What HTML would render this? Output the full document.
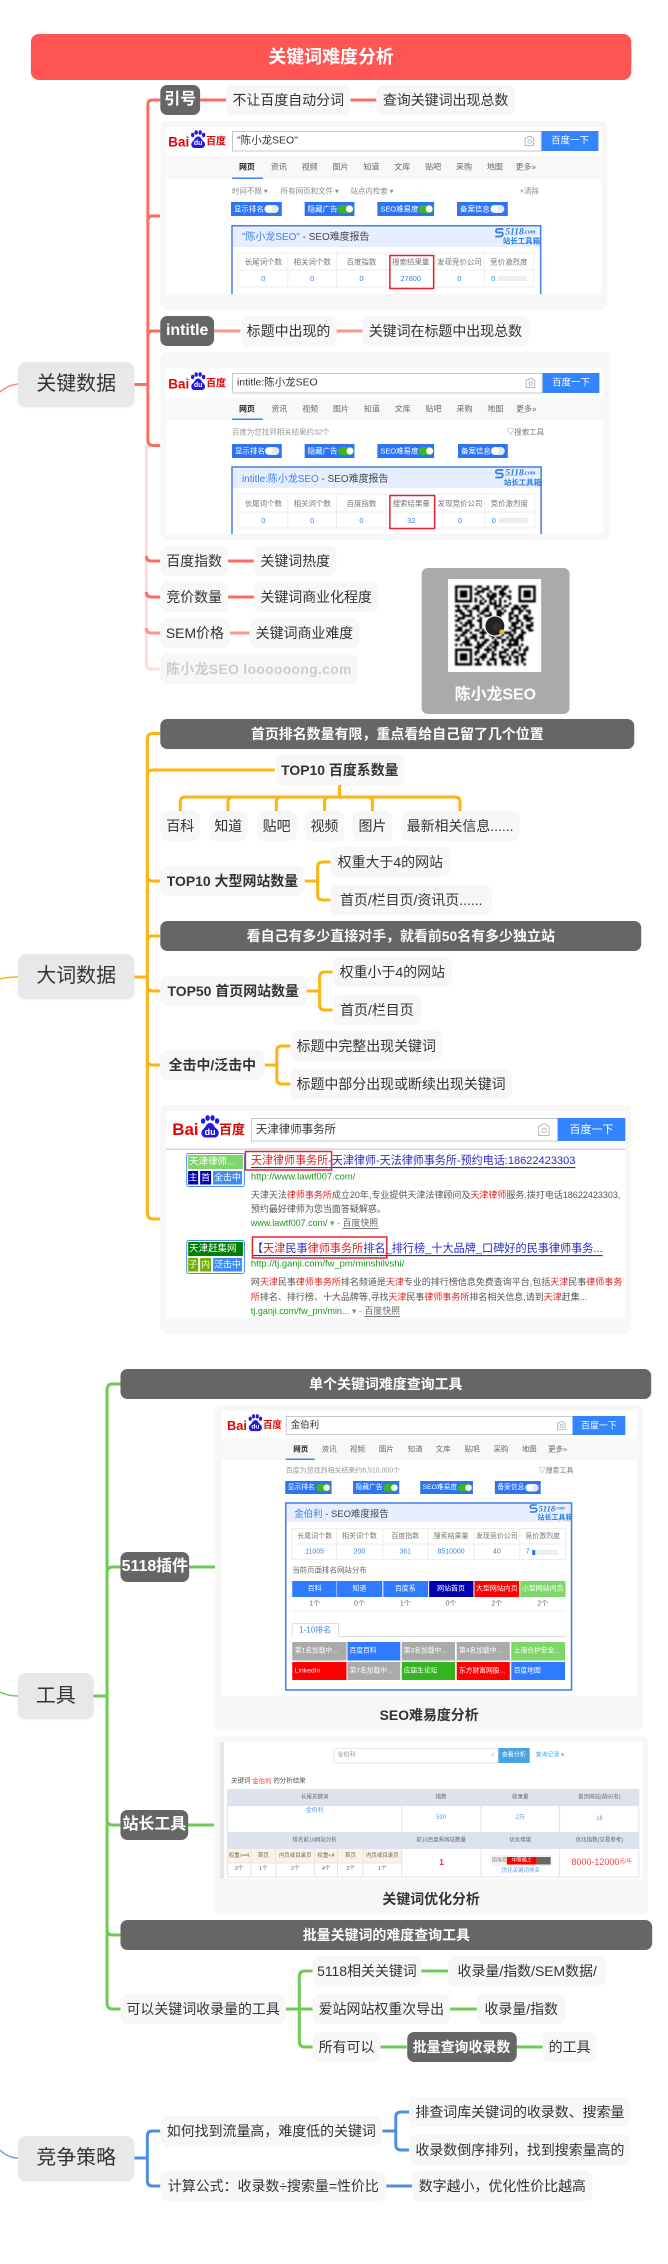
<!DOCTYPE html>
<html lang="zh-CN">
<head>
<meta charset="utf-8">
<title>关键词难度分析</title>
<style>
html,body{margin:0;padding:0;background:#fff}
#p{position:relative;width:668px;height:2264px;overflow:hidden;background:#fff;font-family:"Liberation Sans","Noto Sans CJK SC",sans-serif}
#c{position:absolute;left:0;top:0;width:668px;height:2264px;transform:scaleX(.9957);transform-origin:0 0;filter:blur(.3px)}
#c svg.l{position:absolute;left:0;top:0;font-family:"Liberation Sans","Noto Sans CJK SC",sans-serif}
svg text{dominant-baseline:central;white-space:pre}
.m{text-anchor:middle}
.shot{filter:blur(.3px)}
.n{position:absolute;height:30px;line-height:30px;border-radius:7px;background:#f7f7f7;color:#333;font-size:14px;text-align:center;white-space:nowrap}
.b{font-weight:bold}
.d{background:#666;color:#fff;font-weight:bold}
.h{font-size:16px}
.r{height:45px;line-height:45px;background:#e8e8e8;font-size:20px;border-radius:8px;box-shadow:0 1px 2px rgba(0,0,0,.05)}
.g path{fill:none;stroke-width:3}
</style>
</head>
<body>
<div id="p"><div id="c">
<svg class="l" width="668" height="2264" viewBox="0 0 668 2264">
<!-- connectors -->
<g class="g">
<g stroke="#ff6b61">
<path d="M161,100H153Q148.500,100 148.500,105V440Q148.500,445.500 154,445.500H161"/>
<path d="M161,216H153Q148.500,216 148.500,221"/>
<path d="M161,331H153Q148.500,331 148.500,336"/>
<path d="M135,384.500H148M201,100H227M352,100H378"/>
<path d="M215,331H241.500M338,331H364" stroke="#ff948a"/>
<path d="M147,445V664Q147,669 152,669H161" stroke="#ffdcd8" stroke-width="2"/>
<path d="M147,556Q147,561 152,561H161M229,561H255M147,592Q147,597 152,597H161M229,597H255"/>
<path d="M147,628Q147,633 152,633H161M230,633H250.500" stroke="#ff948a"/>
</g>
<g stroke="#ffb310">
<path d="M161,733.500H153Q148,733.500 148,739V1213Q148,1219 154,1219H161"/>
<path d="M276,770H153Q148,770 148,775M148,876Q148,881 153,881H161M161,936H153Q148,936 148,941M148,986Q148,991 153,991H161M148,1060Q148,1065 153,1065H161M135,977H148"/>
<path d="M341,785V797M181,811V802Q181,797 186,797H457Q462,797 462,802V811M229,811V802Q229,797 234,797M277.500,811V802Q277.500,797 282.500,797M326,811V802Q326,797 331,797M374,811V802Q374,797 369,797"/>
<path d="M306,881H319M332,862H324Q319,862 319,867V895Q319,900 324,900H332"/>
<path d="M307.500,991H321M334,972H326Q321,972 321,977V1005Q321,1010 326,1010H334"/>
<path d="M265.500,1065H278M291.600,1046H283Q278,1046 278,1051V1079Q278,1084 283,1084H291.600"/>
</g>
<g stroke="#6fca55">
<path d="M121,1384H113Q107.500,1384 107.500,1390V2003Q107.500,2009 113,2009H121"/>
<path d="M121,1567H113Q107.500,1567 107.500,1573M107.500,1820Q107.500,1825 113,1825H121M107.500,1930Q107.500,1935 113,1935H121M94,1696H107"/>
<path d="M190,1567H216M189,1825H215M287,2009H314M314,1971H306Q300.600,1971 300.600,1977V2041Q300.600,2047 306,2047H314M423,1971H450M452,2009H479M382,2047H408.500M518.600,2047H545"/>
</g>
<g stroke="#4f8fe0">
<path d="M135,2158H148M161,2131H153Q148,2131 148,2136V2181Q148,2186 153,2186H161M384,2131H397.500M411,2112H403Q397.500,2112 397.500,2117V2145Q397.500,2150 403,2150H411M388,2186H414"/>
</g>
<path d="M0,392Q8,385 18,384" stroke="#ff8a80" style="stroke-width:1.500"/>
<path d="M0,979Q8,977 18,977" stroke="#ffb310" style="stroke-width:1.500"/>
<path d="M0,1692Q8,1696 18,1696" stroke="#6fca55" style="stroke-width:1.500"/>
<path d="M0,2150Q8,2158 18,2158" stroke="#6a9fe8" style="stroke-width:1.500"/>
</g>

<!-- cards -->
<rect x="161" y="121" width="449" height="189" rx="7" fill="#f7f7f7"/>
<rect x="161" y="352" width="451" height="188" rx="7" fill="#f7f7f7"/>
<rect x="161" y="1105" width="473" height="229" rx="7" fill="#f7f7f7"/>
<rect x="216" y="1405" width="430" height="325" rx="7" fill="#f7f7f7"/>
<rect x="215.400" y="1736" width="435.600" height="178" rx="7" fill="#f7f7f7"/>

<text class="m" x="431" y="1715" font-size="14" font-weight="bold" fill="#333">SEO难易度分析</text>
<text class="m" x="433" y="1899" font-size="14" font-weight="bold" fill="#333">关键词优化分析</text>

<!-- QR card -->
<rect x="423.500" y="568" width="148.500" height="146" rx="6" fill="#aaa"/>
<rect x="450" y="579" width="93.500" height="93" fill="#fff"/>
<svg x="457" y="585.500" width="81" height="80" viewBox="0 0 33 33" preserveAspectRatio="none" class="shot">
<path fill="none" stroke="#000" stroke-width="1" d="M0 .5h7m19 0h7M0 1.500h1m5 0h1m19 0h1m5 0h1M0 2.500h1m1 0h3m1 0h1m19 0h1m1 0h3m1 0h1M0 3.500h1m1 0h3m1 0h1m19 0h1m1 0h3m1 0h1M0 4.500h1m1 0h3m1 0h1m19 0h1m1 0h3m1 0h1M0 5.500h1m5 0h1m19 0h1m5 0h1M0 6.500h7m19 0h7M0 26.500h7M0 27.500h1m5 0h1M0 28.500h1m1 0h3m1 0h1M0 29.500h1m1 0h3m1 0h1M0 30.500h1m1 0h3m1 0h1M0 31.500h1m5 0h1M0 32.500h7"/>
<path fill="none" stroke="#000" stroke-width="1" d="M9 .5h2m2 0h1m2 0h3m1 0h2M8 1.500h1m2 0h3m2 0h1m2 0h2M9 2.500h3m2 0h1m3 0h2m2 0h1M8 3.500h2m3 0h1m1 0h2m1 0h3M10 4.500h1m2 0h4m2 0h1m1 0h2M8 5.500h1m2 0h1m2 0h2m2 0h1m3 0h1M8 6.500h1m1 0h1m1 0h1m1 0h1m1 0h1m1 0h1m1 0h1M10 7.500h2m2 0h3m1 0h1m3 0h1M0 8.500h2m1 0h3m2 0h2m3 0h1m2 0h3m1 0h2m2 0h2m1 0h3M1 9.500h1m2 0h1m2 0h3m2 0h2m2 0h1m2 0h1m3 0h4m1 0h1M0 10.500h3m2 0h2m2 0h1m1 0h3m3 0h2m1 0h1m2 0h1m2 0h2m1 0h2M2 11.500h2m2 0h1m3 0h2m2 0h1m2 0h3m2 0h2m2 0h1m3 0h1M0 12.500h1m2 0h4m2 0h1m2 0h3m2 0h2m3 0h1m1 0h2m2 0h2M1 13.500h3m3 0h1m2 0h1m11 0h2m1 0h1m2 0h4M0 14.500h2m3 0h2m2 0h2m11 0h1m2 0h2m2 0h2M2 15.500h1m1 0h3m3 0h1m12 0h3m1 0h1m3 0h1M0 16.500h1m2 0h2m1 0h2m2 0h1m12 0h2m2 0h1m1 0h3M1 17.500h2m3 0h1m3 0h1m11 0h1m1 0h3m2 0h2M0 18.500h3m1 0h2m2 0h2m1 0h1m11 0h2m2 0h1m2 0h2M3 19.500h2m1 0h1m3 0h3m2 0h1m2 0h1m1 0h3m1 0h1m2 0h2M0 20.500h1m1 0h2m3 0h2m2 0h1m2 0h3m2 0h1m2 0h2m2 0h2M1 21.500h1m2 0h1m1 0h3m1 0h2m3 0h1m1 0h2m2 0h1m1 0h1m1 0h3M0 22.500h2m2 0h2m2 0h1m3 0h2m2 0h1m2 0h2m1 0h4m1 0h1M3 23.500h3m3 0h1m1 0h2m2 0h3m1 0h1m2 0h1m1 0h2M0 24.500h1m1 0h1m1 0h3m2 0h3m2 0h1m1 0h2m3 0h5m1 0h1M8 25.500h3m2 0h1m1 0h2m2 0h1m2 0h1m3 0h1m2 0h1M9 26.500h1m2 0h3m1 0h1m3 0h2m2 0h1m1 0h1m1 0h2M8 27.500h2m3 0h1m1 0h1m2 0h3m2 0h3m2 0h1M8 28.500h1m2 0h2m2 0h2m1 0h1m2 0h1m1 0h1m2 0h3M10 29.500h3m2 0h1m2 0h3m1 0h1m1 0h2m1 0h1M8 30.500h2m1 0h1m2 0h3m2 0h1m2 0h1m2 0h1m1 0h2M9 31.500h1m3 0h1m2 0h1m2 0h3m2 0h2m1 0h1M8 32.500h3m2 0h2m1 0h1m2 0h1m1 0h2m2 0h1m2 0h1"/>
</svg>
<circle cx="497" cy="626" r="10.500" fill="#fff"/>
<circle cx="497" cy="626" r="9.500" fill="#1f2129"/>
<circle cx="499" cy="627" r="4.500" fill="#3a2a20"/>
<circle cx="504" cy="632" r="2.500" fill="#f0bb30"/>
<text class="m" x="497.500" y="695" font-size="16" font-weight="bold" fill="#fff">陈小龙SEO</text>

<!-- SCREENSHOT 1 -->
<g class="shot">
<rect x="167" y="127" width="437" height="167" fill="#fff"/>
<rect x="167" y="156" width="437" height="23" fill="#f8f8f8"/>
<g transform="translate(169,130)">
<text x="0" y="12" font-size="13.500" font-weight="bold" fill="#e10601" font-family="Liberation Sans">Bai</text>
<ellipse cx="24.500" cy="5" rx="1.700" ry="2.200" fill="#2319dc"/><ellipse cx="28" cy="2.500" rx="1.700" ry="2.300" fill="#2319dc"/><ellipse cx="32" cy="2.500" rx="1.700" ry="2.300" fill="#2319dc"/><ellipse cx="35.500" cy="5" rx="1.700" ry="2.200" fill="#2319dc"/>
<path d="M30 6.500c-3 0-3 3-5.500 5-2.500 2-1.500 6.500 2 6.500h7c3.500 0 4.500-4.500 2-6.500-2.500-2-2.500-5-5.500-5z" fill="#2319dc"/>
<text class="m" x="30" y="13.500" font-size="7" font-weight="bold" fill="#fff" font-family="Liberation Sans">du</text>
<text x="38" y="12" font-size="10" font-weight="bold" fill="#e10601">百度</text>
</g>
<rect x="233.500" y="131.500" width="310" height="19.500" fill="#fff" stroke="#c4c7ce"/>
<text x="238" y="141" font-size="10.500" fill="#333">"陈小龙SEO"</text>
<path d="M527.500 138h2l1-1.500h3l1 1.500h1.500v7.500h-8.500z" fill="none" stroke="#bbb"/><circle cx="532" cy="141.500" r="1.800" fill="none" stroke="#bbb"/>
<rect x="544" y="131" width="57" height="20" fill="#3385ff"/>
<text class="m" x="572.500" y="141" font-size="9.500" fill="#fff">百度一下</text>
<g font-size="8" fill="#666" text-anchor="middle">
<text x="248" y="167" font-weight="bold" fill="#222">网页</text><text x="280" y="167">资讯</text><text x="311" y="167">视频</text><text x="342" y="167">图片</text><text x="373" y="167">知道</text><text x="404" y="167">文库</text><text x="435" y="167">贴吧</text><text x="466" y="167">采购</text><text x="497" y="167">地图</text><text x="528" y="167">更多»</text>
</g>
<rect x="233" y="177.500" width="31" height="1.500" fill="#3385ff"/>
<g font-size="7.500" fill="#888">
<text x="233" y="191">时间不限 ▾</text><text x="282" y="191">所有网页和文件 ▾</text><text x="352" y="191">站点内检索 ▾</text><text x="522" y="191">×清除</text>
</g>
<g font-size="7.500" fill="#fff">
<rect x="232" y="202" width="51" height="14" fill="#2b74f7"/><text x="235" y="209">显示排名</text><rect x="265.500" y="205" width="14.500" height="8" rx="4" fill="#e8e8e8"/><circle cx="270" cy="209" r="3.500" fill="#fff"/>
<rect x="306" y="202" width="50" height="14" fill="#2b74f7"/><text x="309" y="209">隐藏广告</text><rect x="339" y="205" width="16" height="8" rx="4" fill="#3cb521"/><circle cx="351" cy="209" r="3.500" fill="#fff"/>
<rect x="379" y="202" width="57" height="14" fill="#2b74f7"/><text x="382" y="209">SEO难易度</text><rect x="420" y="205" width="15" height="8" rx="4" fill="#3cb521"/><circle cx="431" cy="209" r="3.500" fill="#fff"/>
<rect x="459" y="202" width="51" height="14" fill="#2b74f7"/><text x="462" y="209">备案信息</text><rect x="492.500" y="205" width="14" height="8" rx="4" fill="#e8e8e8"/><circle cx="497" cy="209" r="3.500" fill="#fff"/>
</g>
<rect x="233" y="226" width="310" height="21" fill="#e6eeff"/>
<path d="M233,294V225.700H543V294" fill="none" stroke="#3f80ea" stroke-width="1.500"/>
<text x="243" y="237" font-size="10"><tspan fill="#3b82e8">"陈小龙SEO"</tspan><tspan fill="#444"> - SEO难度报告</tspan></text>
<path d="M505.500 229H500Q498 229 498 231Q498 232.500 500 232.500H503Q505 232.500 505 234Q505 236.500 502.500 236.500H497.500" fill="none" stroke="#2f7fe0" stroke-width="1.700"/>
<text x="507.500" y="232.500" font-size="9.500" font-style="italic" font-weight="bold" fill="#2f7fe0" font-family="Liberation Serif">5118<tspan font-size="6">.com</tspan></text>
<text x="505" y="241" font-size="7.500" font-weight="bold" fill="#2f7fe0">站长工具箱</text>
<g stroke="#eee" fill="none"><rect x="240" y="253" width="296" height="34"/><path d="M240,270H536M289,253V287M338,253V287M388,253V287M437,253V287M486.500,253V287"/></g>
<g font-size="7.500" fill="#777" text-anchor="middle">
<text x="264.500" y="262">长尾词个数</text><text x="313.500" y="262">相关词个数</text><text x="363" y="262">百度指数</text><text x="412.500" y="262">搜索结果量</text><text x="461.500" y="262">发现竞价公司</text><text x="511" y="262">竞价激烈度</text>
</g>
<g font-size="7.500" fill="#3b82e8" text-anchor="middle">
<text x="264.500" y="278.500">0</text><text x="313.500" y="278.500">0</text><text x="363" y="278.500">0</text><text x="412.500" y="278.500">27800</text><text x="461.500" y="278.500">0</text><text x="495.500" y="278.500">0</text>
</g>
<rect x="500" y="276" width="29" height="5" fill="#eee"/>
<rect x="391.500" y="255.500" width="44" height="33" fill="none" stroke="#e8222e" stroke-width="1.500"/>
</g>

<!-- SCREENSHOT 2 -->
<g class="shot">
<rect x="167" y="368" width="439" height="166" fill="#fff"/>
<rect x="167" y="398" width="439" height="22" fill="#f8f8f8"/>
<g transform="translate(169,372)">
<text x="0" y="12" font-size="13.500" font-weight="bold" fill="#e10601" font-family="Liberation Sans">Bai</text>
<ellipse cx="24.500" cy="5" rx="1.700" ry="2.200" fill="#2319dc"/><ellipse cx="28" cy="2.500" rx="1.700" ry="2.300" fill="#2319dc"/><ellipse cx="32" cy="2.500" rx="1.700" ry="2.300" fill="#2319dc"/><ellipse cx="35.500" cy="5" rx="1.700" ry="2.200" fill="#2319dc"/>
<path d="M30 6.500c-3 0-3 3-5.500 5-2.500 2-1.500 6.500 2 6.500h7c3.500 0 4.500-4.500 2-6.500-2.500-2-2.500-5-5.500-5z" fill="#2319dc"/>
<text class="m" x="30" y="13.500" font-size="7" font-weight="bold" fill="#fff" font-family="Liberation Sans">du</text>
<text x="38" y="12" font-size="10" font-weight="bold" fill="#e10601">百度</text>
</g>
<rect x="233.500" y="373.500" width="311" height="19.500" fill="#fff" stroke="#c4c7ce"/>
<text x="238" y="383" font-size="10.500" fill="#333">intitle:陈小龙SEO</text>
<path d="M528.500 380h2l1-1.500h3l1 1.500h1.500v7.500h-8.500z" fill="none" stroke="#bbb"/><circle cx="533" cy="383.500" r="1.800" fill="none" stroke="#bbb"/>
<rect x="545" y="373" width="57" height="20" fill="#3385ff"/>
<text class="m" x="573.500" y="383" font-size="9.500" fill="#fff">百度一下</text>
<g font-size="8" fill="#666" text-anchor="middle">
<text x="248" y="409" font-weight="bold" fill="#222">网页</text><text x="280.500" y="409">资讯</text><text x="311.500" y="409">视频</text><text x="342.500" y="409">图片</text><text x="373.500" y="409">知道</text><text x="404.500" y="409">文库</text><text x="435.500" y="409">贴吧</text><text x="466.500" y="409">采购</text><text x="497.500" y="409">地图</text><text x="528.500" y="409">更多»</text>
</g>
<rect x="233" y="418.500" width="31" height="1.500" fill="#3385ff"/>
<g font-size="7.500" fill="#999">
<text x="233" y="432">百度为您找到相关结果约32个</text><text x="509" y="432" fill="#777">▽搜索工具</text>
</g>
<g font-size="7.500" fill="#fff">
<rect x="233" y="444" width="50" height="14" fill="#2b74f7"/><text x="236" y="451">显示排名</text><rect x="266" y="447" width="14.500" height="8" rx="4" fill="#e8e8e8"/><circle cx="270.500" cy="451" r="3.500" fill="#fff"/>
<rect x="306" y="444" width="50" height="14" fill="#2b74f7"/><text x="309" y="451">隐藏广告</text><rect x="339.500" y="447" width="16" height="8" rx="4" fill="#3cb521"/><circle cx="351.500" cy="451" r="3.500" fill="#fff"/>
<rect x="379" y="444" width="57" height="14" fill="#2b74f7"/><text x="382" y="451">SEO难易度</text><rect x="420.500" y="447" width="15" height="8" rx="4" fill="#3cb521"/><circle cx="431.500" cy="451" r="3.500" fill="#fff"/>
<rect x="460" y="444" width="50" height="14" fill="#2b74f7"/><text x="463" y="451">备案信息</text><rect x="493" y="447" width="14" height="8" rx="4" fill="#e8e8e8"/><circle cx="497.500" cy="451" r="3.500" fill="#fff"/>
</g>
<rect x="233" y="467" width="311" height="21" fill="#e6eeff"/>
<path d="M233,534V467H543.500V534" fill="none" stroke="#3f80ea" stroke-width="1.500"/>
<text x="243" y="479" font-size="10"><tspan fill="#3b82e8">intitle:陈小龙SEO</tspan><tspan fill="#444"> - SEO难度报告</tspan></text>
<path d="M505.500 470H500Q498 470 498 472Q498 473.500 500 473.500H503Q505 473.500 505 475Q505 477.500 502.500 477.500H497.500" fill="none" stroke="#2f7fe0" stroke-width="1.700"/>
<text x="507.500" y="473.500" font-size="9.500" font-style="italic" font-weight="bold" fill="#2f7fe0" font-family="Liberation Serif">5118<tspan font-size="6">.com</tspan></text>
<text x="506" y="482.500" font-size="7.500" font-weight="bold" fill="#2f7fe0">站长工具箱</text>
<g stroke="#eee" fill="none"><rect x="240" y="494" width="297" height="34"/><path d="M240,512H537M289,494V528M338,494V528M388,494V528M437,494V528M487,494V528"/></g>
<g font-size="7.500" fill="#777" text-anchor="middle">
<text x="264.500" y="503.500">长尾词个数</text><text x="313.500" y="503.500">相关词个数</text><text x="363" y="503.500">百度指数</text><text x="413" y="503.500">搜索结果量</text><text x="462" y="503.500">发现竞价公司</text><text x="511.500" y="503.500">竞价激烈度</text>
</g>
<g font-size="7.500" fill="#3b82e8" text-anchor="middle">
<text x="264.500" y="520.500">0</text><text x="313.500" y="520.500">0</text><text x="363" y="520.500">0</text><text x="413" y="520.500">32</text><text x="462" y="520.500">0</text><text x="496" y="520.500">0</text>
</g>
<rect x="501" y="518" width="29" height="5" fill="#eee"/>
<rect x="391.500" y="495.500" width="45" height="33" fill="none" stroke="#e8222e" stroke-width="1.500"/>
</g>

<!-- SCREENSHOT 3 -->
<g class="shot">
<rect x="167" y="1111" width="461" height="207" fill="#fff"/>
<rect x="167" y="1148.500" width="461" height="1.500" fill="#d5d5d5"/>
<g transform="translate(173,1115)">
<text x="0" y="14.500" font-size="17" font-weight="bold" fill="#e10601" font-family="Liberation Sans">Bai</text>
<ellipse cx="31" cy="6" rx="2.200" ry="2.800" fill="#2319dc"/><ellipse cx="35.500" cy="3" rx="2.200" ry="2.900" fill="#2319dc"/><ellipse cx="40.500" cy="3" rx="2.200" ry="2.900" fill="#2319dc"/><ellipse cx="45" cy="6" rx="2.200" ry="2.800" fill="#2319dc"/>
<path d="M38 8c-3.800 0-3.800 3.800-7 6.300-3 2.500-1.900 8.200 2.500 8.200h9c4.400 0 5.500-5.700 2.500-8.200-3.200-2.500-3.200-6.300-7-6.300z" fill="#2319dc"/>
<text class="m" x="38" y="17" font-size="9" font-weight="bold" fill="#fff" font-family="Liberation Sans">du</text>
<text x="47" y="14.500" font-size="13" font-weight="bold" fill="#e10601">百度</text>
</g>
<rect x="252.500" y="1118.500" width="308" height="22.500" fill="#fff" stroke="#c4c7ce"/>
<text x="257" y="1130" font-size="11.500" fill="#333">天津律师事务所</text>
<path d="M541 1126h2.500l1-2h4l1 2h2v9.500h-10.500z" fill="none" stroke="#bbb"/><circle cx="546.500" cy="1130.500" r="2.200" fill="none" stroke="#bbb"/>
<rect x="560" y="1118" width="68" height="23" fill="#3385ff"/>
<text class="m" x="594" y="1130" font-size="11" fill="#fff">百度一下</text>

<rect x="187.500" y="1153.500" width="58" height="33" rx="2" fill="#fff" stroke="#4a8df0"/>
<rect x="189" y="1155" width="55" height="14" fill="#7fd66a"/>
<text x="190" y="1162" font-size="9.500" fill="#fff">天津律师...</text>
<rect x="189" y="1171" width="10" height="13.500" fill="#0000b0"/><text class="m" x="194" y="1177.500" font-size="9" fill="#fff">主</text>
<rect x="201" y="1171" width="11" height="13.500" fill="#0000b0"/><text class="m" x="206.500" y="1177.500" font-size="9" fill="#fff">首</text>
<rect x="214" y="1171" width="29" height="13.500" fill="#3d8cf5"/><text class="m" x="228.500" y="1177.500" font-size="9" fill="#fff">全击中</text>

<text x="252" y="1161" font-size="11.100" text-decoration="underline" fill="#2a2ac8"><tspan fill="#e02020">天津律师事务所</tspan>-天津律师-天法律师事务所-预约电话:18622423303</text>
<rect x="246.500" y="1151.500" width="86.500" height="18.500" fill="none" stroke="#e8222e" stroke-width="1.500"/>
<text x="252" y="1177" font-size="9.500" fill="#1a961a">http://www.lawtf007.com/</text>
<text x="252" y="1195" font-size="9.050" fill="#555">天津天法<tspan fill="#e02020">律师事务所</tspan>成立20年,专业提供天津法律顾问及<tspan fill="#e02020">天津律师</tspan>服务.拨打电话18622423303,</text>
<text x="252" y="1209" font-size="9.050" fill="#555">预约最好律师为您当面答疑解惑。</text>
<text x="252" y="1223" font-size="9" fill="#1a961a">www.lawtf007.com/ <tspan fill="#888">▾ - </tspan><tspan fill="#666" text-decoration="underline">百度快照</tspan></text>

<rect x="187.500" y="1240.500" width="58" height="33" rx="2" fill="#fff" stroke="#4a8df0"/>
<rect x="189" y="1242" width="55" height="14" fill="#008000"/>
<text x="190" y="1249" font-size="9.500" fill="#fff">天津赶集网</text>
<rect x="189" y="1258" width="10" height="13.500" fill="#6fb000"/><text class="m" x="194" y="1264.500" font-size="9" fill="#fff">子</text>
<rect x="201" y="1258" width="11" height="13.500" fill="#6fb000"/><text class="m" x="206.500" y="1264.500" font-size="9" fill="#fff">内</text>
<rect x="214" y="1258" width="29" height="13.500" fill="#3d8cf5"/><text class="m" x="228.500" y="1264.500" font-size="9" fill="#fff">泛击中</text>

<text x="253" y="1249" font-size="11.200" text-decoration="underline" fill="#2a2ac8">【<tspan fill="#e02020">天津</tspan>民事<tspan fill="#e02020">律师事务所</tspan>排名_排行榜_十大品牌_口碑好的民事律师事务...</text>
<rect x="253.500" y="1237" width="135" height="21" fill="none" stroke="#e8222e" stroke-width="1.500"/>
<text x="252" y="1264" font-size="9.500" fill="#1a961a">http://tj.ganji.com/fw_pm/minshilvshi/</text>
<text x="252" y="1282" font-size="9.050" fill="#555">网<tspan fill="#e02020">天津</tspan>民事<tspan fill="#e02020">律师事务所</tspan>排名频道是<tspan fill="#e02020">天津</tspan>专业的排行榜信息免费查询平台,包括<tspan fill="#e02020">天津</tspan>民事<tspan fill="#e02020">律师事务</tspan></text>
<text x="252" y="1297" font-size="9.050" fill="#555"><tspan fill="#e02020">所</tspan>排名、排行榜、十大品牌等,寻找<tspan fill="#e02020">天津</tspan>民事<tspan fill="#e02020">律师事务所</tspan>排名相关信息,请到<tspan fill="#e02020">天津</tspan>赶集...</text>
<text x="252" y="1311" font-size="9" fill="#1a961a">tj.ganji.com/fw_pm/min... <tspan fill="#888">▾ - </tspan><tspan fill="#666" text-decoration="underline">百度快照</tspan></text>
</g>

<!-- SCREENSHOT 4 -->
<g class="shot">
<rect x="222.700" y="1411" width="417.300" height="285" fill="#fff"/>
<rect x="222.700" y="1439" width="417.300" height="21" fill="#f8f8f8"/>
<g transform="translate(228,1414) scale(.95)">
<text x="0" y="12" font-size="13.500" font-weight="bold" fill="#e10601" font-family="Liberation Sans">Bai</text>
<ellipse cx="24.500" cy="5" rx="1.700" ry="2.200" fill="#2319dc"/><ellipse cx="28" cy="2.500" rx="1.700" ry="2.300" fill="#2319dc"/><ellipse cx="32" cy="2.500" rx="1.700" ry="2.300" fill="#2319dc"/><ellipse cx="35.500" cy="5" rx="1.700" ry="2.200" fill="#2319dc"/>
<path d="M30 6.500c-3 0-3 3-5.500 5-2.500 2-1.500 6.500 2 6.500h7c3.500 0 4.500-4.500 2-6.500-2.500-2-2.500-5-5.500-5z" fill="#2319dc"/>
<text class="m" x="30" y="13.500" font-size="7" font-weight="bold" fill="#fff" font-family="Liberation Sans">du</text>
<text x="38" y="12" font-size="10" font-weight="bold" fill="#e10601">百度</text>
</g>
<rect x="287.500" y="1416.500" width="288" height="18" fill="#fff" stroke="#c4c7ce"/>
<text x="292" y="1425.500" font-size="9.500" fill="#333">金伯利</text>
<path d="M560 1423h1.500l1-1.500h2.500l1 1.500h1.500v6.500h-7.500z" fill="none" stroke="#bbb"/><circle cx="564" cy="1426" r="1.500" fill="none" stroke="#bbb"/>
<rect x="575" y="1416" width="53" height="19" fill="#3385ff"/>
<text class="m" x="601.500" y="1425.500" font-size="9" fill="#fff">百度一下</text>
<g font-size="7.500" fill="#666" text-anchor="middle">
<text x="302" y="1449" font-weight="bold" fill="#222">网页</text><text x="330.600" y="1449">资讯</text><text x="359" y="1449">视频</text><text x="388" y="1449">图片</text><text x="417" y="1449">知道</text><text x="445" y="1449">文库</text><text x="474" y="1449">贴吧</text><text x="503" y="1449">采购</text><text x="531.500" y="1449">地图</text><text x="560" y="1449">更多»</text>
</g>
<rect x="287" y="1458.500" width="29" height="1.500" fill="#3385ff"/>
<g font-size="7" fill="#999">
<text x="287" y="1471">百度为您找到相关结果约8,510,000个</text><text x="541" y="1471" fill="#777">▽搜索工具</text>
</g>
<g font-size="6.800" fill="#fff">
<rect x="286.500" y="1481" width="46.500" height="13" fill="#2b74f7"/><text x="289" y="1487.500">显示排名</text><rect x="317.500" y="1484" width="14.500" height="7.500" rx="3.700" fill="#3cb521"/><circle cx="328" cy="1487.700" r="3.200" fill="#fff"/>
<rect x="354.600" y="1481" width="46.400" height="13" fill="#2b74f7"/><text x="357" y="1487.500">隐藏广告</text><rect x="385" y="1484" width="15" height="7.500" rx="3.700" fill="#3cb521"/><circle cx="396" cy="1487.700" r="3.200" fill="#fff"/>
<rect x="422" y="1481" width="53" height="13" fill="#2b74f7"/><text x="424.500" y="1487.500">SEO难易度</text><rect x="460" y="1484" width="14.500" height="7.500" rx="3.700" fill="#3cb521"/><circle cx="470.500" cy="1487.700" r="3.200" fill="#fff"/>
<rect x="497" y="1481" width="46" height="13" fill="#2b74f7"/><text x="499.500" y="1487.500">备案信息</text><rect x="527.500" y="1484" width="13.500" height="7.500" rx="3.700" fill="#e8e8e8"/><circle cx="532" cy="1487.700" r="3.200" fill="#fff"/>
</g>
<rect x="287" y="1503" width="287" height="187" fill="#fff" stroke="#3a7be8" stroke-width="1.500"/>
<rect x="288" y="1504" width="285" height="18" fill="#e6eeff"/>
<text x="295.500" y="1514" font-size="9.500"><tspan fill="#3b82e8">金伯利</tspan><tspan fill="#444"> - SEO难度报告</tspan></text>
<path d="M539 1505H534.500Q532.500 1505 532.500 1507Q532.500 1508.300 534.500 1508.300H537Q539 1508.300 539 1509.800Q539 1512 536.500 1512H532" fill="none" stroke="#2f7fe0" stroke-width="1.500"/>
<text x="541" y="1508.500" font-size="8.500" font-style="italic" font-weight="bold" fill="#2f7fe0" font-family="Liberation Serif">5118<tspan font-size="5">.com</tspan></text>
<text x="540" y="1518" font-size="7" font-weight="bold" fill="#2f7fe0">站长工具箱</text>
<g stroke="#eee" fill="none"><rect x="293.500" y="1528.500" width="274.500" height="31"/><path d="M293,1544H568M338,1528V1559M384.600,1528V1559M430,1528V1559M476,1528V1559M522,1528V1559"/></g>
<g font-size="7" fill="#777" text-anchor="middle">
<text x="316" y="1536.500">长尾词个数</text><text x="361" y="1536.500">相关词个数</text><text x="407" y="1536.500">百度指数</text><text x="453" y="1536.500">搜索结果量</text><text x="499" y="1536.500">发现竞价公司</text><text x="545" y="1536.500">竞价激烈度</text>
</g>
<g font-size="7" fill="#3b82e8" text-anchor="middle">
<text x="316" y="1552">11005</text><text x="361" y="1552">200</text><text x="407" y="1552">361</text><text x="453" y="1552">8510000</text><text x="499" y="1552">40</text><text x="530" y="1552">7</text>
</g>
<rect x="534.500" y="1550" width="26" height="5" fill="#eee"/><rect x="534.500" y="1550" width="3" height="5" fill="#2b74f7"/>
<text x="293.500" y="1570" font-size="7.500" fill="#666">当前页面排名网站分布</text>
<rect x="293.500" y="1581" width="44.500" height="16" fill="#2e7bff"/><rect x="338.500" y="1581" width="45.500" height="16" fill="#2e7bff"/><rect x="385" y="1581" width="45" height="16" fill="#2e7bff"/><rect x="431" y="1581" width="44.500" height="16" fill="#0000b0"/><rect x="476.500" y="1581" width="45" height="16" fill="#ff0000"/><rect x="522.500" y="1581" width="45.500" height="16" fill="#7fd66a"/>
<g font-size="7" fill="#fff" text-anchor="middle">
<text x="316" y="1589">百科</text><text x="361" y="1589">知道</text><text x="407" y="1589">百度系</text><text x="453" y="1589">网站首页</text><text x="499" y="1589">大型网站内页</text><text x="545" y="1589">小型网站内页</text>
</g>
<g font-size="7" fill="#666" text-anchor="middle">
<text x="316" y="1604">1个</text><text x="361" y="1604">0个</text><text x="407" y="1604">1个</text><text x="453" y="1604">0个</text><text x="499" y="1604">2个</text><text x="545" y="1604">2个</text>
</g>
<path d="M293,1611H568" stroke="#eee"/>
<path d="M340,1636.500H568M293.500,1636V1623.500H340V1636" fill="none" stroke="#ddd"/>
<text class="m" x="316.500" y="1630" font-size="8" fill="#3b82e8">1-10排名</text>
<rect x="293.500" y="1642" width="54.500" height="18.500" fill="#aaa"/><rect x="349" y="1642" width="53" height="18.500" fill="#2e7bff"/><rect x="403.500" y="1642" width="53.500" height="18.500" fill="#aaa"/><rect x="458.700" y="1642" width="53.300" height="18.500" fill="#aaa"/><rect x="513.500" y="1642" width="54" height="18.500" fill="#7fd66a"/>
<rect x="293.500" y="1662" width="54.500" height="18" fill="#ff0000"/><rect x="349" y="1662" width="53" height="18" fill="#aaa"/><rect x="403.500" y="1662" width="53.500" height="18" fill="#33b520"/><rect x="458.700" y="1662" width="53.300" height="18" fill="#ff0000"/><rect x="513.500" y="1662" width="54" height="18" fill="#2e7bff"/>
<g font-size="6.800" fill="#fff">
<text x="296" y="1651">第1名加载中...</text><text x="351" y="1651">百度百科</text><text x="405.500" y="1651">第3名加载中...</text><text x="461" y="1651">第4名加载中...</text><text x="516" y="1651">上海合护安全...</text>
<text x="296" y="1671">LinkedIn</text><text x="351" y="1671">第7名加载中...</text><text x="405.500" y="1671">应届生论坛</text><text x="461" y="1671">东方财富网股...</text><text x="516" y="1671">百度地图</text>
</g>
</g>

<!-- SCREENSHOT 5 -->
<g class="shot">
<rect x="221" y="1742" width="424" height="137" fill="#fff"/>
<rect x="221" y="1742" width="4" height="137" fill="#e8e8e8"/>
<rect x="335.500" y="1748.500" width="165" height="14.500" fill="#fff" stroke="#e4e7f2"/>
<text x="339" y="1755.500" font-size="6" fill="#999">金伯利</text>
<text x="493" y="1755.500" font-size="7" fill="#ccc">×</text>
<rect x="500.500" y="1748" width="31.500" height="15" fill="#4ba3e3"/>
<text class="m" x="516" y="1755.500" font-size="6" fill="#fff">查看分析</text>
<text x="538" y="1755.500" font-size="6" fill="#4ba3e3">查询记录 ▾</text>
<text x="232" y="1781" font-size="6.500" fill="#555">关键词 <tspan fill="#ff4444">金伯利</tspan> 的分析结果</text>
<rect x="228" y="1789" width="414" height="17" fill="#dde3ee"/>
<rect x="228" y="1832" width="414" height="17" fill="#dde3ee"/>
<rect x="228" y="1849" width="175" height="14" fill="#fdf3e3"/>
<g stroke="#dfe4ee" fill="none"><rect x="228.500" y="1789.500" width="413" height="87.500"/><path d="M403.400,1789V1877M483,1789V1877M562,1789V1877M252,1849V1877M277,1849V1877M316,1849V1877M339,1849V1877M364.500,1849V1877M228,1863H403"/></g>
<g font-size="5.500" fill="#666" text-anchor="middle">
<text x="316" y="1797.500">长尾关键词</text><text x="443" y="1797.500">指数</text><text x="522.500" y="1797.500">收录量</text><text x="602" y="1797.500">首页网站(前50名)</text>
<text x="316" y="1840.500">排名前10网站分析</text><text x="443" y="1840.500">前10百度系网站数量</text><text x="522.500" y="1840.500">优化难度</text><text x="602" y="1840.500">优化指数(交易参考)</text>
<text x="240" y="1856">权重>=4</text><text x="264.500" y="1856">首页</text><text x="296.500" y="1856">内页或目录页</text><text x="327.500" y="1856">权重&lt;4</text><text x="352" y="1856">首页</text><text x="384" y="1856">内页或目录页</text>
<text x="240" y="1869">3个</text><text x="264.500" y="1869">1个</text><text x="296.500" y="1869">2个</text><text x="327.500" y="1869">4个</text><text x="352" y="1869">3个</text><text x="384" y="1869">1个</text>
</g>
<g font-size="6" fill="#5b9be8" text-anchor="middle">
<text x="316" y="1811">金伯利</text><text x="443" y="1818">530</text><text x="522.500" y="1818">2万</text><text x="602" y="1819">16</text>
</g>
<text class="m" x="443.500" y="1862.500" font-size="8" font-weight="bold" fill="#e8222e">1</text>
<rect x="492" y="1855" width="63" height="11" rx="1" fill="#f4f4f4"/>
<text x="494" y="1860.500" font-size="5" fill="#888">困难度</text>
<rect x="509" y="1857" width="30" height="7.500" fill="#ff0000"/><rect x="539" y="1857" width="14" height="7.500" fill="#666"/>
<text class="m" x="524" y="1860.500" font-size="5" fill="#fff">中等偏上</text>
<text class="m" x="523" y="1871" font-size="5.500" fill="#5b9be8">优化关键词排名</text>
<text x="574" y="1862" font-size="9" fill="#ff4444">8000-12000<tspan font-size="5.500">元/年</tspan></text>
</g>
</svg>

<!-- title -->
<div class="n" style="left:31px;top:34px;width:603px;height:46px;line-height:46px;background:#ff5555;color:#fff;font-size:18px;font-weight:bold;border-radius:8px">关键词难度分析</div>

<!-- root nodes -->
<div class="n r" style="left:18px;top:362px;width:117px">关键数据</div>
<div class="n r" style="left:18px;top:954px;width:117px">大词数据</div>
<div class="n r" style="left:18px;top:1673px;width:76px;height:46px;line-height:46px">工具</div>
<div class="n r" style="left:18px;top:2136px;width:117px">竞争策略</div>

<!-- section 1 -->
<div class="n d h" style="left:161px;top:85px;width:40px">引号</div>
<div class="n" style="left:227px;top:85px;width:125px">不让百度自动分词</div>
<div class="n" style="left:378px;top:85px;width:139px">查询关键词出现总数</div>
<div class="n d h" style="left:161px;top:316px;width:54px">intitle</div>
<div class="n" style="left:241.500px;top:316px;width:96.500px">标题中出现的</div>
<div class="n" style="left:364px;top:316px;width:166.600px">关键词在标题中出现总数</div>
<div class="n" style="left:161px;top:546px;width:68px">百度指数</div>
<div class="n" style="left:255px;top:546px;width:83px">关键词热度</div>
<div class="n" style="left:161px;top:582px;width:68px">竞价数量</div>
<div class="n" style="left:255px;top:582px;width:125px">关键词商业化程度</div>
<div class="n" style="left:161px;top:618px;width:69.500px">SEM价格</div>
<div class="n" style="left:250.500px;top:618px;width:110.500px">关键词商业难度</div>
<div class="n b" style="left:161px;top:654px;width:198px;color:#ccc;letter-spacing:.3px">陈小龙SEO loooooong.com</div>

<!-- section 2 -->
<div class="n d" style="left:161px;top:719px;width:476px">首页排名数量有限，重点看给自己留了几个位置</div>
<div class="n b" style="left:276.700px;top:755px;width:129.300px">TOP10 百度系数量</div>
<div class="n" style="left:161px;top:811px;width:40px">百科</div>
<div class="n" style="left:209.500px;top:811px;width:39.500px">知道</div>
<div class="n" style="left:258px;top:811px;width:39.600px">贴吧</div>
<div class="n" style="left:306px;top:811px;width:39.600px">视频</div>
<div class="n" style="left:354px;top:811px;width:40px">图片</div>
<div class="n" style="left:402.600px;top:811px;width:119px">最新相关信息......</div>
<div class="n b" style="left:161px;top:866px;width:145px">TOP10 大型网站数量</div>
<div class="n" style="left:332px;top:847px;width:120px">权重大于4的网站</div>
<div class="n" style="left:332px;top:885px;width:162px">首页/栏目页/资讯页......</div>
<div class="n d" style="left:161px;top:921px;width:483px">看自己有多少直接对手，就看前50名有多少独立站</div>
<div class="n b" style="left:161px;top:976px;width:146.500px">TOP50 首页网站数量</div>
<div class="n" style="left:334px;top:957px;width:120px">权重小于4的网站</div>
<div class="n" style="left:334px;top:995px;width:89px">首页/栏目页</div>
<div class="n b" style="left:161px;top:1050px;width:104.500px">全击中/泛击中</div>
<div class="n" style="left:291.600px;top:1031px;width:152.400px">标题中完整出现关键词</div>
<div class="n" style="left:291.600px;top:1069px;width:222.400px">标题中部分出现或断续出现关键词</div>

<!-- section 3 -->
<div class="n d" style="left:121px;top:1369px;width:533px">单个关键词难度查询工具</div>
<div class="n d h" style="left:121px;top:1552px;width:69px">5118插件</div>
<div class="n d h" style="left:121px;top:1810px;width:68px">站长工具</div>
<div class="n d" style="left:121px;top:1920px;width:534px">批量关键词的难度查询工具</div>
<div class="n" style="left:314px;top:1956px;width:109px">5118相关关键词</div>
<div class="n" style="left:450px;top:1956px;width:159px">收录量/指数/SEM数据/</div>
<div class="n" style="left:121px;top:1994px;width:166px">可以关键词收录量的工具</div>
<div class="n" style="left:314px;top:1994px;width:138px">爱站网站权重次导出</div>
<div class="n" style="left:479px;top:1994px;width:89px">收录量/指数</div>
<div class="n" style="left:314px;top:2032px;width:68px">所有可以</div>
<div class="n d" style="left:408.500px;top:2032px;width:110px">批量查询收录数</div>
<div class="n" style="left:545px;top:2032px;width:54px">的工具</div>

<!-- section 4 -->
<div class="n" style="left:161px;top:2116px;width:223px">如何找到流量高，难度低的关键词</div>
<div class="n" style="left:161px;top:2171px;width:227px">计算公式：收录数÷搜索量=性价比</div>
<div class="n" style="left:414px;top:2171px;width:181px">数字越小，优化性价比越高</div>
<div class="n" style="left:411px;top:2097px;width:222.400px">排查词库关键词的收录数、搜索量</div>
<div class="n" style="left:411px;top:2135px;width:222.400px">收录数倒序排列，找到搜索量高的</div>
</div></div>
</body>
</html>
